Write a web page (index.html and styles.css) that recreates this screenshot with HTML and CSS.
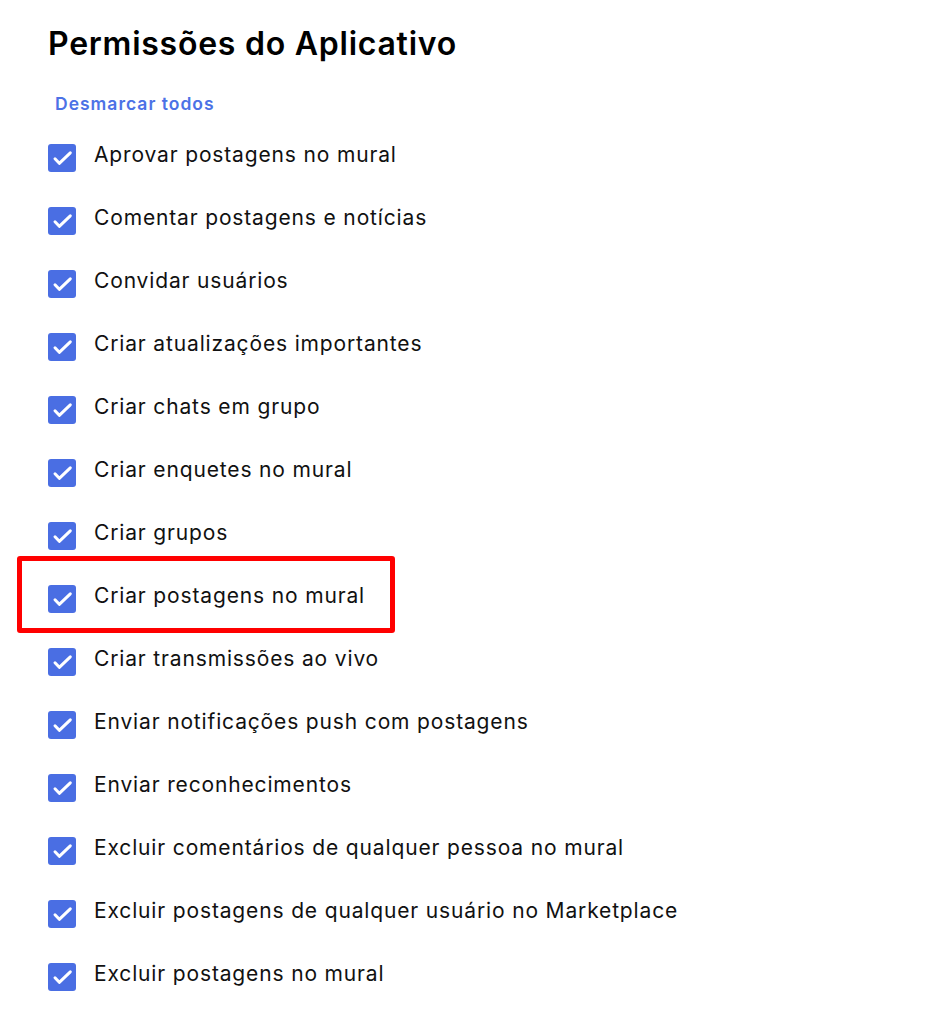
FILE: index.html
```html
<!DOCTYPE html>
<html lang="pt-BR">
<head>
<meta charset="utf-8">
<title>Permissões do Aplicativo</title>
<link rel="stylesheet" href="styles.css">
</head>
<body>
<main class="page">
  <h1 class="title">Permissões do Aplicativo</h1>
  <a class="toggle-all" href="#">Desmarcar todos</a>
  <ul class="perm-list">
    <li class="perm"><span class="box"><svg viewBox="0 0 28 28"><path d="M7 14.8l4.3 4.5 11-10.5"/></svg></span><span class="label">Aprovar postagens no mural</span></li>
    <li class="perm"><span class="box"><svg viewBox="0 0 28 28"><path d="M7 14.8l4.3 4.5 11-10.5"/></svg></span><span class="label">Comentar postagens e notícias</span></li>
    <li class="perm"><span class="box"><svg viewBox="0 0 28 28"><path d="M7 14.8l4.3 4.5 11-10.5"/></svg></span><span class="label">Convidar usuários</span></li>
    <li class="perm"><span class="box"><svg viewBox="0 0 28 28"><path d="M7 14.8l4.3 4.5 11-10.5"/></svg></span><span class="label">Criar atualizações importantes</span></li>
    <li class="perm"><span class="box"><svg viewBox="0 0 28 28"><path d="M7 14.8l4.3 4.5 11-10.5"/></svg></span><span class="label">Criar chats em grupo</span></li>
    <li class="perm"><span class="box"><svg viewBox="0 0 28 28"><path d="M7 14.8l4.3 4.5 11-10.5"/></svg></span><span class="label">Criar enquetes no mural</span></li>
    <li class="perm"><span class="box"><svg viewBox="0 0 28 28"><path d="M7 14.8l4.3 4.5 11-10.5"/></svg></span><span class="label">Criar grupos</span></li>
    <li class="perm highlighted"><span class="box"><svg viewBox="0 0 28 28"><path d="M7 14.8l4.3 4.5 11-10.5"/></svg></span><span class="label">Criar postagens no mural</span></li>
    <li class="perm"><span class="box"><svg viewBox="0 0 28 28"><path d="M7 14.8l4.3 4.5 11-10.5"/></svg></span><span class="label">Criar transmissões ao vivo</span></li>
    <li class="perm"><span class="box"><svg viewBox="0 0 28 28"><path d="M7 14.8l4.3 4.5 11-10.5"/></svg></span><span class="label">Enviar notificações push com postagens</span></li>
    <li class="perm"><span class="box"><svg viewBox="0 0 28 28"><path d="M7 14.8l4.3 4.5 11-10.5"/></svg></span><span class="label">Enviar reconhecimentos</span></li>
    <li class="perm"><span class="box"><svg viewBox="0 0 28 28"><path d="M7 14.8l4.3 4.5 11-10.5"/></svg></span><span class="label">Excluir comentários de qualquer pessoa no mural</span></li>
    <li class="perm"><span class="box"><svg viewBox="0 0 28 28"><path d="M7 14.8l4.3 4.5 11-10.5"/></svg></span><span class="label">Excluir postagens de qualquer usuário no Marketplace</span></li>
    <li class="perm"><span class="box"><svg viewBox="0 0 28 28"><path d="M7 14.8l4.3 4.5 11-10.5"/></svg></span><span class="label">Excluir postagens no mural</span></li>
  </ul>
</main>
</body>
</html>
```

FILE: styles.css
```css
html, body {
  margin: 0;
  padding: 0;
  background: #fff;
}

body {
  font-family: Inter, "Noto Sans", "Liberation Sans", sans-serif;
  color: #111;
}

.page {
  padding: 24px 0 0 48px;
  display: flex;
  flex-direction: column;
  align-items: flex-start;
}

.title {
  margin: 0;
  font-size: 32px;
  line-height: 40px;
  font-weight: 600;
  color: #000;
  letter-spacing: 0.75px;
}

.toggle-all {
  margin: 30px 0 0 7px;
  font-size: 17.5px;
  line-height: 20px;
  font-weight: 600;
  color: #4c72e6;
  text-decoration: none;
  letter-spacing: 1px;
}

.perm-list {
  list-style: none;
  margin: 12px 0 0 0;
  padding: 0;
  display: flex;
  flex-direction: column;
}

.perm {
  height: 63px;
  display: flex;
  align-items: center;
  gap: 18px;
}

.box {
  width: 28px;
  height: 28px;
  border-radius: 3px;
  background: #4a6ee3;
  flex: none;
  display: flex;
}

.box svg {
  width: 28px;
  height: 28px;
  fill: none;
  stroke: #fff;
  stroke-width: 3;
  stroke-linecap: round;
  stroke-linejoin: round;
}

.label {
  font-size: 21px;
  line-height: 24px;
  padding-bottom: 6px;
  color: #111;
  letter-spacing: 0.85px;
}

.highlighted {
  position: relative;
}

.highlighted::after {
  content: "";
  position: absolute;
  left: -31px;
  top: -11px;
  width: 378px;
  height: 77px;
  box-sizing: border-box;
  border: 5px solid #ff0000;
  border-radius: 3px;
  pointer-events: none;
}
```
